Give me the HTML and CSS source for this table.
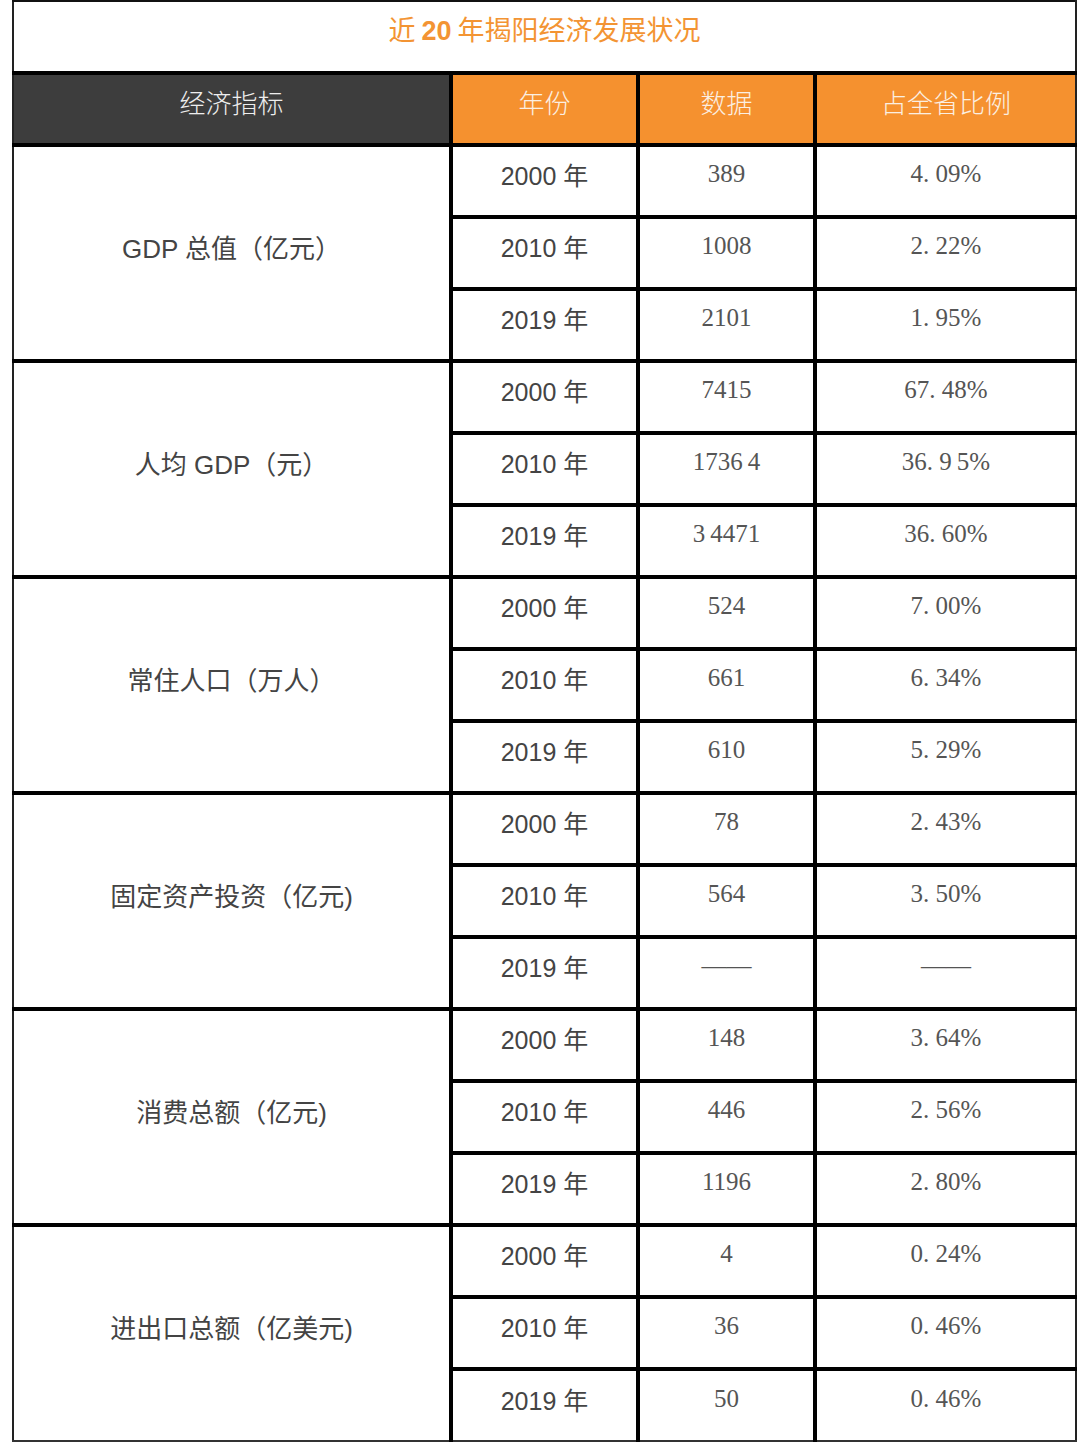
FILE: index.html
```html
<!DOCTYPE html>
<html lang="zh-CN">
<head>
<meta charset="utf-8">
<title>近20年揭阳经济发展状况</title>
<link rel="stylesheet" href="styles.css">
</head>
<body>
<table class="stats">
  <colgroup>
    <col class="c1"><col class="c2"><col class="c3"><col class="c4">
  </colgroup>
  <tr class="title-row">
    <td colspan="4" class="title edge-l edge-r edge-t">近 <b>20</b> 年揭阳经济发展状况</td>
  </tr>
  <tr class="head-row">
    <th class="h-dark edge-l">经济指标</th>
    <th class="h-orange">年份</th>
    <th class="h-orange">数据</th>
    <th class="h-orange edge-r">占全省比例</th>
  </tr>

  <tr><td rowspan="3" class="label edge-l">GDP 总值（亿元）</td><td class="year">2000 年</td><td class="num">389</td><td class="num edge-r">4. 09%</td></tr>
  <tr><td class="year">2010 年</td><td class="num">1008</td><td class="num edge-r">2. 22%</td></tr>
  <tr><td class="year">2019 年</td><td class="num">2101</td><td class="num edge-r">1. 95%</td></tr>

  <tr><td rowspan="3" class="label edge-l">人均 GDP（元）</td><td class="year">2000 年</td><td class="num">7415</td><td class="num edge-r">67. 48%</td></tr>
  <tr><td class="year">2010 年</td><td class="num">1736&#8201;4</td><td class="num edge-r">36. 9&#8201;5%</td></tr>
  <tr><td class="year">2019 年</td><td class="num">3&#8201;4471</td><td class="num edge-r">36. 60%</td></tr>

  <tr><td rowspan="3" class="label edge-l">常住人口（万人）</td><td class="year">2000 年</td><td class="num">524</td><td class="num edge-r">7. 00%</td></tr>
  <tr><td class="year">2010 年</td><td class="num">661</td><td class="num edge-r">6. 34%</td></tr>
  <tr><td class="year">2019 年</td><td class="num">610</td><td class="num edge-r">5. 29%</td></tr>

  <tr><td rowspan="3" class="label edge-l">固定资产投资（亿元)</td><td class="year">2000 年</td><td class="num">78</td><td class="num edge-r">2. 43%</td></tr>
  <tr><td class="year">2010 年</td><td class="num">564</td><td class="num edge-r">3. 50%</td></tr>
  <tr><td class="year">2019 年</td><td class="num">——</td><td class="num edge-r">——</td></tr>

  <tr><td rowspan="3" class="label edge-l">消费总额（亿元)</td><td class="year">2000 年</td><td class="num">148</td><td class="num edge-r">3. 64%</td></tr>
  <tr><td class="year">2010 年</td><td class="num">446</td><td class="num edge-r">2. 56%</td></tr>
  <tr><td class="year">2019 年</td><td class="num">1196</td><td class="num edge-r">2. 80%</td></tr>

  <tr><td rowspan="3" class="label edge-l edge-b">进出口总额（亿美元)</td><td class="year">2000 年</td><td class="num">4</td><td class="num edge-r">0. 24%</td></tr>
  <tr><td class="year">2010 年</td><td class="num">36</td><td class="num edge-r">0. 46%</td></tr>
  <tr><td class="year edge-b">2019 年</td><td class="num edge-b">50</td><td class="num edge-r edge-b">0. 46%</td></tr>
</table>
</body>
</html>
```

FILE: styles.css
```css
html, body {
  margin: 0;
  padding: 0;
  background: #ffffff;
}

.stats {
  margin-left: 12px;
  width: 1063px;
  border-collapse: collapse;
  table-layout: fixed;
  font-family: "Liberation Sans", "Noto Sans CJK SC", sans-serif;
}

.c1 { width: 438px; }
.c2 { width: 187px; }
.c3 { width: 177px; }
.c4 { width: 261px; }

.stats td, .stats th {
  border: 4px solid #000;
  padding: 0 0 14px 0;
  text-align: center;
  vertical-align: middle;
  font-weight: normal;
}

.stats .edge-l { border-left: 2px solid #222; }
.stats .edge-r { border-right: 2px solid #222; }
.stats .edge-t { border-top: 2px solid #111; }
.stats .edge-b { border-bottom: 2px solid #333; }

.title-row { height: 72px; }
.stats .title {
  color: #f39433;
  font-size: 27px;
  font-family: "Noto Sans CJK SC", sans-serif;
  font-weight: 400;
  padding-bottom: 16px;
}
.title b {
  font-family: "Liberation Sans", sans-serif;
  font-weight: 700;
}

.head-row { height: 72px; }
.stats th {
  font-weight: 300;
  padding-bottom: 16px;
}
.h-dark {
  background: #3d3d3d;
  color: #eeeeee;
  font-size: 26px;
  font-family: "Noto Sans CJK SC", sans-serif;
}
.h-orange {
  background: #f5912f;
  color: #fbefe2;
  font-size: 26px;
  font-family: "Noto Sans CJK SC", sans-serif;
}

.stats tr { height: 72px; }

.label {
  color: #444;
  font-size: 26px;
  font-family: "Liberation Sans", "Noto Sans CJK SC", sans-serif;
  font-weight: 300;
}
.year {
  color: #444;
  font-size: 25px;
  font-family: "Liberation Sans", "Noto Sans CJK SC", sans-serif;
}
.num {
  color: #555;
  font-size: 25px;
  font-family: "Liberation Serif", "Noto Sans CJK SC", serif;
}
```
